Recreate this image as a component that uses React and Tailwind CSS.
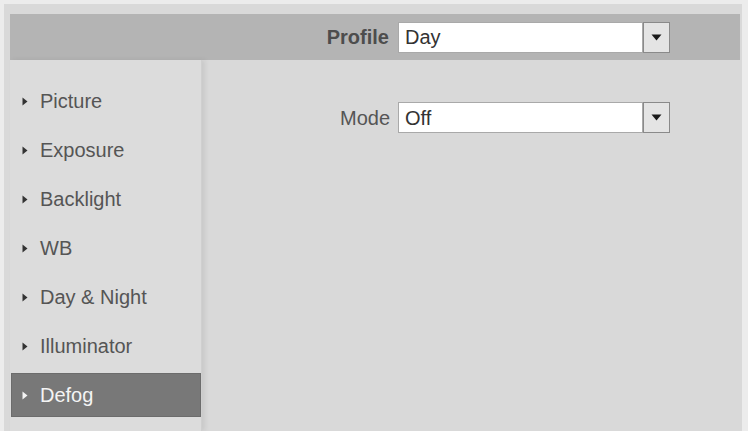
import React from "react";

const items = ["Picture", "Exposure", "Backlight", "WB", "Day & Night", "Illuminator", "Defog"];

function Select({ value }) {
  return (
    <div className="flex h-[31px]">
      <div className="w-[245px] h-full bg-white border border-[#a9a9a9] flex items-center pl-[6px] text-[20px] text-[#333]">
        {value}
      </div>
      <div className="w-[27px] h-full bg-[#e4e4e4] border border-[#8a8a8a] flex items-center justify-center">
        <svg width="11" height="7" viewBox="0 0 11 7">
          <path d="M0.5 0.5 H10.5 L5.5 6.5 Z" fill="#1a1a1a" />
        </svg>
      </div>
    </div>
  );
}

export default function App() {
  return (
    <div
      className="w-[748px] h-[431px] bg-[#ececec] overflow-hidden"
      style={{ fontFamily: '"Liberation Sans", Arial, sans-serif' }}
    >
      <div className="ml-[4px] mt-[4px] w-[738px] h-[427px] bg-[#d9d9d9] pt-[10px] pl-[6px] pr-[2px]">
        <div className="h-[46px] w-[730px] bg-[#b4b4b4] flex items-center">
          <div className="w-[380px] text-right text-[20px] font-bold text-[#4d4d4d] pr-[1px]">Profile</div>
          <div className="ml-[8px]">
            <Select value="Day" />
          </div>
        </div>
        <div className="flex">
          <div className="w-[192px] h-[371px] bg-[#dcdcdc] pt-[19px] border-r border-[#cfcfcf] shadow-[3px_0_5px_rgba(0,0,0,0.08)]">
            {items.map((it) => {
              const sel = it === "Defog";
              return (
                <div
                  key={it}
                  className={
                    "h-[44px] mb-[5px] flex items-center text-[20px] " +
                    (sel ? "bg-[#787878] text-[#f4f4f4] border border-[#6c6c6c] ml-[1px] pl-[10px]" : "text-[#555] pl-[12px]")
                  }
                >
                  <svg width="6" height="9" viewBox="0 0 6 9" className="mr-[12px]">
                    <path d="M0.5 0.5 L5.5 4.5 L0.5 8.5 Z" fill={sel ? "#f4f4f4" : "#333"} />
                  </svg>
                  <span>{it}</span>
                </div>
              );
            })}
          </div>
          <div className="flex-1 pt-[42px]">
            <div className="flex items-center">
              <div className="w-[188px] text-right text-[20px] text-[#555]">Mode</div>
              <div className="ml-[8px]">
                <Select value="Off" />
              </div>
            </div>
          </div>
        </div>
      </div>
    </div>
  );
}
